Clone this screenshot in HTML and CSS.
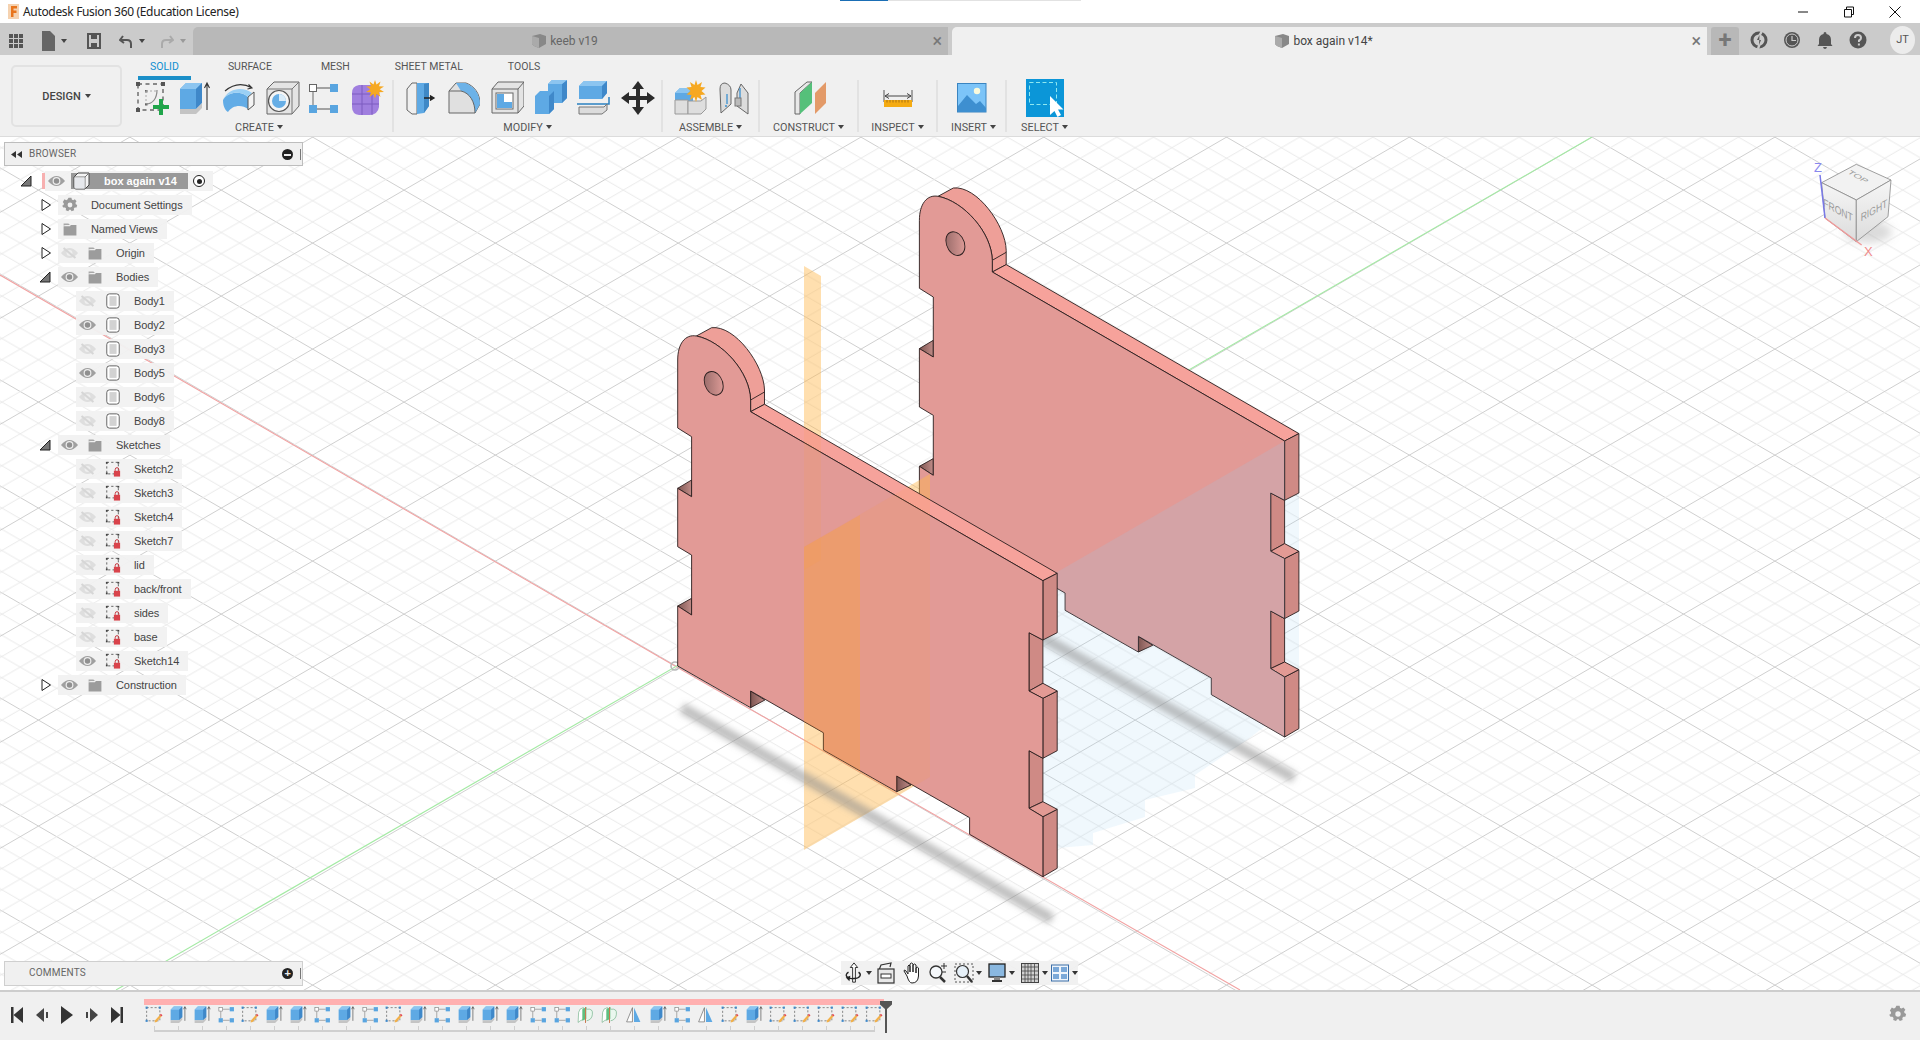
FILE: index.html
```html
<!DOCTYPE html>
<html lang="en">
<head>
<meta charset="utf-8">
<title>Autodesk Fusion 360 (Education License)</title>
<link rel="stylesheet" href="styles.css">
</head>
<body>
<svg class="sprites" width="0" height="0">
<defs>
<symbol id="i-sketch" viewBox="0 0 36 36"><rect x="5" y="4" width="25" height="26" fill="none" stroke="#666" stroke-width="1.4" stroke-dasharray="4 3.5"/><g fill="#555"><rect x="3" y="2" width="4" height="4"/><rect x="28" y="2" width="4" height="4"/><rect x="3" y="28" width="4" height="4"/></g><rect x="12" y="10" width="2.5" height="2.5" fill="#666"/><rect x="12" y="23" width="2.5" height="2.5" fill="#666"/><path d="M13 24C20 24 24 18 24 10" fill="none" stroke="#888" stroke-width="1.2"/><path d="M13 11H24M13 11V24" fill="none" stroke="#aaa" stroke-dasharray="2 2"/><path d="M26 19h4v6h6v4h-6v6h-4v-6h-6v-4h6z" fill="#20a54a"/></symbol>
<symbol id="i-extrude" viewBox="0 0 36 36"><polygon points="5,9 11,3 27,3 27,23 21,29 5,29" fill="#5ea9e4"/><polygon points="5,9 11,3 27,3 21,9" fill="#8cc5f0"/><polygon points="21,9 27,3 27,23 21,29" fill="#3f88c9"/><polygon points="5,29 21,29 27,23 27,28 21,34 5,34" fill="#c4c4c4"/><path d="M32 30V4M29.500 8L32 3l2.500 5" fill="none" stroke="#333" stroke-width="1.100"/></symbol>
<symbol id="i-revolve" viewBox="0 0 36 36"><path d="M2 20C7 11 21 11 27 17L27 29C21 24 11 25 7 32C4 30 2 26 2 20Z" fill="#62ace6"/><path d="M2 20C7 11 21 11 27 17L31 13C22 6 7 8 2 20Z" fill="#9ad0f5"/><path d="M27 17L33 12V25L27 30Z" fill="#f4f4f4" stroke="#555"/><path d="M4 11Q17 0 31 8M27.500 4.500L31 8L26.500 9" fill="none" stroke="#333" stroke-width="1.100"/></symbol>
<symbol id="i-hole" viewBox="0 0 36 36"><polygon points="2,9 9,2 34,2 34,26 27,34 2,34" fill="#e4e4e4" stroke="#666"/><path d="M2 9H27V34M27 9L34 2" fill="none" stroke="#777"/><circle cx="14" cy="21" r="10.500" fill="#f5f5f5" stroke="#555" stroke-width="1.200"/><circle cx="14" cy="21" r="7" fill="#66aee6"/><path d="M14 14A7 7 0 0 1 21 21L14 21Z" fill="#d8ecfa"/></symbol>
<symbol id="i-pattern" viewBox="0 0 36 36"><path d="M13 8H26M9 12V25M13 29H26" stroke="#888" stroke-width="1.300" fill="none"/><rect x="5.500" y="4.500" width="7" height="7" fill="#fff" stroke="#666"/><rect x="26" y="4" width="8" height="8" fill="#59a5e0"/><rect x="5" y="25" width="8" height="8" fill="#59a5e0"/><rect x="26" y="25" width="8" height="8" fill="#59a5e0"/></symbol>
<symbol id="i-form" viewBox="0 0 36 36"><path d="M4 13Q4 6 11 5H24Q31 7 31 14V27Q30 34 22 35H11Q4 34 4 27Z" fill="#a07fdf"/><path d="M4 14H31M4 24H31M14 5V35M24 5V35" stroke="#7c5cc0" fill="none"/><path d="M31 14Q31 8 24 5" fill="none" stroke="#c6b2f0" stroke-width="2"/><path d="M27 0l1.500 4.500 4-3-1.500 4.800 5 .2-4.300 2.800 4.300 2.800-5 .2 1.500 4.800-4-3-1.500 4.500-1.500-4.500-4 3 1.500-4.800-5-.2 4.300-2.800-4.300-2.800 5-.2-1.500-4.800 4 3z" fill="#f6a821"/></symbol>
<symbol id="i-press" viewBox="0 0 36 36"><path d="M7 9L12 3H17V34H12L7 30Z" fill="#efefef" stroke="#666"/><polygon points="17,3 24,3 29,3 29,26 24,33 17,34" fill="#5ea9e4"/><polygon points="24,4 29,3 29,26 24,33" fill="#3e88c6"/><path d="M24 18H32M30 15.500L34 18L30 20.500" fill="#222" stroke="#222" stroke-width="1.300"/></symbol>
<symbol id="i-fillet" viewBox="0 0 36 36"><path d="M5 11L12 3H22C30 6 36 13 36 24L31 33H5Z" fill="#e0e0e0" stroke="#666"/><path d="M12 3H21C30 6 36 14 36 24L31 33C31 22 26 13 17 11Z" fill="#6cb2e8"/><path d="M5 11H17C26 13 31 22 31 33" fill="none" stroke="#666"/></symbol>
<symbol id="i-shell" viewBox="0 0 36 36"><polygon points="4,9 10,2 36,2 36,26 30,33 4,33" fill="#e4e4e4" stroke="#666"/><path d="M4 9H30V33M30 9L36 2" fill="none" stroke="#666"/><rect x="8" y="13" width="17" height="16" fill="#fff" stroke="#666"/><polygon points="9,14 16,14 16,22 24,22 24,28 9,28" fill="#5ea9e4"/></symbol>
<symbol id="i-combine" viewBox="0 0 36 36"><polygon points="16,4 20,0 35,0 35,18 30,23 16,23" fill="#5ea9e4"/><polygon points="3,16 8,11 22,11 22,29 17,34 3,34" fill="#5ea9e4"/><polygon points="30,4 35,0 35,18 30,23" fill="#3f88c9"/><polygon points="17,16 22,11 22,29 17,34" fill="#3f88c9"/><polygon points="16,4 20,0 35,0 30,4" fill="#8cc5f0"/></symbol>
<symbol id="i-split" viewBox="0 0 36 36"><polygon points="3,6 8,1 31,1 31,13 26,19 3,19" fill="#5ea9e4"/><polygon points="3,6 8,1 31,1 26,6" fill="#8cc5f0"/><polygon points="26,6 31,1 31,13 26,19" fill="#3f88c9"/><path d="M1 24L33 24L33 17" fill="none" stroke="#2a80c0" stroke-width="1.500"/><polygon points="3,27 28,27 31,24 31,30 26,34 3,34" fill="#dcdcdc" stroke="#777"/></symbol>
<symbol id="i-move" viewBox="0 0 36 36"><path d="M18 1l6 8h-4v7h7v-4l8 6-8 6v-4h-7v7h4l-6 8-6-8h4v-7H9v4l-8-6 8-6v4h7V9h-4z" fill="#2b2b2b"/></symbol>
<symbol id="i-assemble" viewBox="0 0 36 36"><polygon points="4,13 9,8 22,8 22,22 17,28 4,28" fill="#5ea9e4"/><polygon points="4,13 9,8 22,8 17,13" fill="#8cc5f0"/><polygon points="4,20 17,20 17,34 4,34" fill="#dedede" stroke="#999"/><polygon points="17,21 30,21 35,17 35,29 30,34 17,34" fill="#dedede" stroke="#999"/><path d="M25 0l1.500 5 4.500-3-1.500 5 5 .5-4 3.500 4 3.500-5 .5 1.500 5-4.500-3-1.500 5-1.500-5-4.500 3 1.500-5-5-.5 4-3.500-4-3.500 5-.5-1.500-5 4.500 3z" fill="#f6a821"/></symbol>
<symbol id="i-joint" viewBox="0 0 36 36"><path d="M5 9Q5 3 10 3Q16 5 16 10V24L6 33Z" fill="#dcdcdc" stroke="#666"/><path d="M22 13L26 4L33 13V34L22 26Z" fill="#dcdcdc" stroke="#666"/><path d="M12 14V24M10 26H12" stroke="#3a90d0" stroke-width="1.300" fill="none"/><path d="M25 8V18" stroke="#3a90d0" stroke-width="1.300"/><rect x="20" y="18" width="6" height="8" fill="#bbb" stroke="#777"/></symbol>
<symbol id="i-construct" viewBox="0 0 36 36"><polygon points="4,12 16,2 21,2 9,13 9,34 4,34" fill="#e8e8e8" stroke="#666"/><polygon points="9,13 21,2 21,23 9,34" fill="#55c07a"/><polygon points="24,13 35,2 35,23 24,34" fill="#e39a68"/></symbol>
<symbol id="i-inspect" viewBox="0 0 36 36"><path d="M4 10V22M32 10V22" stroke="#555"/><path d="M5 16H31M9 13.500L5 16L9 18.500M27 13.500L31 16L27 18.500" stroke="#444" fill="none"/><rect x="4" y="20" width="28" height="7" fill="#f5ab12"/><path d="M7 20v2.500M10 20v2.500M13 20v2.500M16 20v2.500M19 20v2.500M22 20v2.500M25 20v2.500M28 20v2.500" stroke="#8a5a10" stroke-width=".7"/></symbol>
<symbol id="i-insert" viewBox="0 0 36 36"><rect x="3.500" y="3.500" width="28.500" height="28.500" fill="#7cc4f8" stroke="#3a84c0"/><circle cx="23" cy="11" r="3.200" fill="#fafadc"/><path d="M4 26L13 15L22 24L26 21L32 28V32H4Z" fill="#3e8fd0"/></symbol>
<symbol id="i-select" viewBox="0 0 38 38"><rect width="38" height="38" fill="#0b96d8"/><rect x="3.500" y="3.500" width="27" height="22" fill="none" stroke="#8fe8f0" stroke-dasharray="4 2.500"/><path d="M24 17V36L28.500 32L31.500 38L35 36L32 30.500H37.500Z" fill="#fff"/></symbol>
<symbol id="t-sk" viewBox="0 0 36 36"><rect x="5" y="5" width="25" height="25" fill="none" stroke="#666" stroke-width="1.400" stroke-dasharray="4 3.500"/><g fill="#3f88c9"><rect x="3" y="3" width="4" height="4"/><rect x="28" y="3" width="4" height="4"/><rect x="3" y="28" width="4" height="4"/></g><path d="M20 33l1-4 9-10 3 3-9 10z" fill="#f2b04a"/><path d="M30 19l3 3 2-2.500-3-3z" fill="#e5484d"/></symbol>
<symbol id="t-con" viewBox="0 0 36 36"><path d="M5 14Q6 6 14 5L14 27Q7 30 4 33Z" fill="#fff" stroke="#4f9f6c"/><path d="M12 8L20 4V26L12 30Z" fill="#60c080"/><path d="M18 4L18 34" stroke="#c87a50" stroke-width="2"/><path d="M20 8Q33 6 31 18Q30 28 20 30" fill="#eaf7ee" stroke="#4f9f6c"/></symbol>
<symbol id="t-mir" viewBox="0 0 36 36"><polygon points="5,32 16,5 16,32" fill="#fff" stroke="#666" stroke-width="1.300"/><polygon points="19,5 31,32 19,32" fill="#5ea9e4"/></symbol>
<symbol id="eye" viewBox="0 0 20 14"><path d="M0 7Q10 -5 20 7Q10 19 0 7Z" fill="#a0a0a0"/><circle cx="10" cy="7" r="4.600" fill="#eee"/><circle cx="10" cy="7" r="3.200" fill="#909090"/></symbol>
<symbol id="eye-off" viewBox="0 0 20 14"><path d="M0 7Q10 -5 20 7Q10 19 0 7Z" fill="#dedede"/><circle cx="10" cy="7" r="3.500" fill="#eee"/><path d="M3 1L17 13" stroke="#d6d6d6" stroke-width="2.400"/></symbol>
<symbol id="folder" viewBox="0 0 20 16"><path d="M2 1h6l2 2H4v1H2z" fill="#a8a8a8"/><rect x="2" y="3.500" width="8" height="1" fill="#eee"/><path d="M2 4.500H10L11 3H18V16H2Z" fill="#9c9c9c"/></symbol>
<symbol id="gear" viewBox="0 0 20 20"><path d="M8 1h4l.6 2.600 1.800.8L16.700 3l2.400 2.900-1.500 2.200.4 1.900 2 1-.9 3.600-2.500-.1-1.300 1.500.4 2.500-3.500 1.200-1.300-2.100h-2l-1.300 2.100-3.500-1.200.4-2.500-1.300-1.500-2.500.1L-.9 12l2-1 .4-1.900-1.500-2.200L2.400 3l2.300 1.400 1.800-.8z" fill="#999" transform="translate(1 0) scale(.9)"/><circle cx="10" cy="10" r="3" fill="#f0f0f0"/></symbol>
<symbol id="body" viewBox="0 0 16 18"><rect x="1" y="1" width="14" height="16" rx="3" fill="#fff" stroke="#555"/><rect x="4" y="3.500" width="8" height="11" fill="#d2d2d2"/></symbol>
<symbol id="rootbox" viewBox="0 0 17 18"><path d="M1 5L5 1H16V13L12 17H3Q1 17 1 15Z" fill="#f4f4f4" stroke="#444"/><path d="M1 5H12V17M12 5L16 1" fill="none" stroke="#777"/><polygon points="1.500,5.500 11.500,5.500 11.500,16.500 1.500,16.500" fill="#e6e8ec"/></symbol>
<symbol id="sk-lock" viewBox="0 0 18 18"><rect x="2" y="1.500" width="13" height="13" fill="none" stroke="#555" stroke-dasharray="2.500 2.500"/><g fill="#444"><rect x="1" y="1" width="2" height="2"/><rect x="14" y="1" width="2" height="2"/><rect x="1" y="13" width="2" height="2"/></g><path d="M11.500 11V9.500a2 2 0 0 1 4 0V11" fill="none" stroke="#c4323a" stroke-width="1.100"/><rect x="10" y="11" width="7" height="6.500" fill="#d9434b"/></symbol>
<symbol id="cube" viewBox="0 0 16 16"><path d="M1 3L9 1L15 3V11L8 15L3 13L1 11Z" fill="#888"/><path d="M1 3L8 5V15L3 13L1 11Z" fill="#aaa"/></symbol>
<symbol id="tri-c" viewBox="0 0 12 12"><polygon points="3,.5 11.500,6 3,11.500" fill="#fff" stroke="#222"/></symbol>
<symbol id="tri-o" viewBox="0 0 12 12"><polygon points="1,11 11,1 11,11" fill="#777" stroke="#222"/></symbol>
</defs>
</svg>

<div class="app">
  <header class="titlebar">
    <svg class="f-logo" viewBox="0 0 11 15"><rect width="11" height="15" fill="#f5d2b0"/><path d="M3 2H9V4.500H5.500V6.500H8.500V9H5.500V13H3Z" fill="#e8741c"/></svg>
    <span class="app-title">Autodesk Fusion 360 (Education License)</span>
    <div class="progress"><span class="progress-on"></span></div>
    <div class="winctl">
      <svg viewBox="0 0 12 12"><path d="M1 6H11" stroke="#111"/></svg>
      <svg viewBox="0 0 12 12"><path d="M1.500 3.500H8.500V11H1.500ZM3.500 3.500V1H10.500V8.500H8.500" fill="none" stroke="#111"/></svg>
      <svg viewBox="0 0 12 12"><path d="M.5 .5L11.500 11.500M11.500 .5L.5 11.500" stroke="#111"/></svg>
    </div>
  </header>

  <div class="tabstrip">
    <div class="quick">
      <svg class="q-grid" viewBox="0 0 14 14"><g fill="#555"><rect width="4" height="4"/><rect x="5" width="4" height="4"/><rect x="10" width="4" height="4"/><rect y="5" width="4" height="4"/><rect x="5" y="5" width="4" height="4"/><rect x="10" y="5" width="4" height="4"/><rect y="10" width="4" height="4"/><rect x="5" y="10" width="4" height="4"/><rect x="10" y="10" width="4" height="4"/></g></svg>
      <svg class="q-doc" viewBox="0 0 13 20"><path d="M0 0H8L13 5V20H0Z" fill="#666"/></svg><i class="caret q-c1"></i>
      <svg class="q-save" viewBox="0 0 14 16"><path d="M1 1H13V15H1Z" fill="none" stroke="#555" stroke-width="2"/><rect x="4" y="1" width="6" height="5" fill="#555"/><rect x="4" y="10" width="6" height="5" fill="#555"/></svg>
      <svg class="q-undo" viewBox="0 0 14 14"><path d="M4 2L1 6L5 9M1.500 6H8Q12 6 12 10V14" fill="none" stroke="#555" stroke-width="2"/></svg><i class="caret q-c2"></i>
      <svg class="q-redo" viewBox="0 0 14 14"><path d="M10 2L13 6L9 9M12.500 6H6Q2 6 2 10V14" fill="none" stroke="#aaa" stroke-width="2"/></svg><i class="caret q-c3"></i>
    </div>
    <div class="doc-tab doc-tab-off">
      <span class="doc-name"><svg class="doc-cube"><use href="#cube"/></svg>keeb v19</span><span class="doc-x">&#215;</span>
    </div>
    <div class="doc-tab doc-tab-on">
      <span class="doc-name"><svg class="doc-cube"><use href="#cube"/></svg>box again v14*</span><span class="doc-x">&#215;</span>
    </div>
    <div class="newtab">+</div>
    <div class="account">
      <svg viewBox="0 0 18 18"><circle cx="9" cy="9" r="7" fill="none" stroke="#555" stroke-width="3"/><path d="M12 0L7 9H11L8 18" stroke="#cbcbcb" stroke-width="2.400" fill="none"/><path d="M9.500 4L7 9H11L9 14Z" fill="#555"/></svg>
      <svg viewBox="0 0 18 18"><circle cx="9" cy="9" r="8" fill="#555"/><circle cx="9" cy="9" r="6" fill="none" stroke="#ccc"/><path d="M9 5V9.500H13" stroke="#ccc" fill="none" stroke-width="1.200"/></svg>
      <svg viewBox="0 0 18 18"><path d="M9 1Q10.500 1 10.500 3Q15 4 15 9V13L16.500 15H1.500L3 13V9Q3 4 7.500 3Q7.500 1 9 1ZM7 16H11Q10.500 18 9 18Q7.500 18 7 16Z" fill="#555"/></svg>
      <svg viewBox="0 0 18 18"><circle cx="9" cy="9" r="8.500" fill="#555"/><path d="M6 7Q6 4 9 4Q12 4 12 7Q12 8.500 10 9.500V11M9.900 12.500V14.500" stroke="#ccc" stroke-width="2" fill="none"/></svg>
      <span class="avatar">JT</span>
    </div>
  </div>

  <div class="ribbon">
    <button class="design">DESIGN<i class="caret"></i></button>
    <div class="tools">
      <nav class="rtabs">
        <span class="rtab rtab-on">SOLID</span><span class="rtab rtab-wide">SURFACE</span><span class="rtab">MESH</span><span class="rtab">SHEET METAL</span><span class="rtab">TOOLS</span>
      </nav>
      <div class="groups">
        <div class="grp g-create">
          <div class="tbtns"><svg class="tb"><use href="#i-sketch"/></svg><svg class="tb tb-s2"><use href="#i-extrude"/></svg><svg class="tb"><use href="#i-revolve"/></svg><svg class="tb"><use href="#i-hole"/></svg><svg class="tb tb-s5"><use href="#i-pattern"/></svg><svg class="tb tb-s5"><use href="#i-form"/></svg></div>
          <div class="glabel">CREATE<i class="caret"></i></div>
        </div>
        <div class="grp g-modify">
          <div class="tbtns"><svg class="tb"><use href="#i-press"/></svg><svg class="tb"><use href="#i-fillet"/></svg><svg class="tb"><use href="#i-shell"/></svg><svg class="tb"><use href="#i-combine"/></svg><svg class="tb"><use href="#i-split"/></svg><svg class="tb"><use href="#i-move"/></svg></div>
          <div class="glabel">MODIFY<i class="caret"></i></div>
        </div>
        <div class="grp g-assemble">
          <div class="tbtns"><svg class="tb"><use href="#i-assemble"/></svg><svg class="tb"><use href="#i-joint"/></svg></div>
          <div class="glabel">ASSEMBLE<i class="caret"></i></div>
        </div>
        <div class="grp g-construct">
          <div class="tbtns"><svg class="tb"><use href="#i-construct"/></svg></div>
          <div class="glabel">CONSTRUCT<i class="caret"></i></div>
        </div>
        <div class="grp g-inspect">
          <div class="tbtns"><svg class="tb"><use href="#i-inspect"/></svg></div>
          <div class="glabel">INSPECT<i class="caret"></i></div>
        </div>
        <div class="grp g-insert">
          <div class="tbtns"><svg class="tb"><use href="#i-insert"/></svg></div>
          <div class="glabel">INSERT<i class="caret"></i></div>
        </div>
        <div class="grp g-select">
          <div class="tbtns"><svg class="tb tb-sel"><use href="#i-select"/></svg></div>
          <div class="glabel">SELECT<i class="caret"></i></div>
        </div>
      </div>
    </div>
  </div>

  <main class="viewport">
    <svg class="scene" viewBox="0 137 1920 853" preserveAspectRatio="none">
      <defs>
        <pattern id="gA" patternUnits="userSpaceOnUse" width="100" height="106" patternTransform="translate(0 61.3) skewY(30.11)">
          <rect width="100" height="1" fill="#cfcfcf"/>
          <g fill="#e9e9e9"><rect y="21.200" width="100" height="1"/><rect y="42.400" width="100" height="1"/><rect y="63.600" width="100" height="1"/><rect y="84.800" width="100" height="1"/></g>
        </pattern>
        <pattern id="gB" patternUnits="userSpaceOnUse" width="100" height="106" patternTransform="translate(0 1059.900) skewY(-30.11)">
          <rect width="100" height="1" fill="#cfcfcf"/>
          <g fill="#e9e9e9"><rect y="21.200" width="100" height="1"/><rect y="42.400" width="100" height="1"/><rect y="63.600" width="100" height="1"/><rect y="84.800" width="100" height="1"/></g>
        </pattern>
        <filter id="blur3" x="-10%" y="-30%" width="120%" height="160%"><feGaussianBlur stdDeviation="3"/></filter>
        <filter id="blur6" x="-50%" y="-50%" width="200%" height="200%"><feGaussianBlur stdDeviation="4"/></filter>
        <linearGradient id="holeG" x1="0" x2="1" y1="0" y2="0"><stop offset="0" stop-color="#9c6e6c"/><stop offset="1" stop-color="#dc9a96"/></linearGradient>
        <linearGradient id="notchG" x1="0" x2="1" y1="0" y2="0"><stop offset="0" stop-color="#7e5652"/><stop offset="1" stop-color="#c08c88"/></linearGradient>
        <linearGradient id="cubeG" x1="0" x2="0" y1="0" y2="1"><stop offset="0" stop-color="#f6f6f6"/><stop offset="1" stop-color="#dcdcdc"/></linearGradient>
        <path id="faceP" d="M677.700 428L677.700 360C677.700 344 685 334 696.400 336C722 341 750 372 750.600 400L750.600 411.700L1042.900 580.700L1042.900 640L1029 632.700L1029 691L1042.900 698.300L1042.900 758.300L1029 750.700L1029 808.300L1042.900 816.700L1042.900 876.700L969.600 834.300L969.600 817.700L896.700 776L896.700 791.700L823.400 750L823.400 732.700L750.600 691L750.600 707.700L677.700 666L677.700 606L691.600 615L691.600 555L677.700 546.700L677.700 488.300L691.600 496.700L691.600 436.700Z"/>
        <polygon id="topP" points="750.600,411.700 764.500,404.300 1057.200,573.300 1042.900,580.700"/>
        <clipPath id="clipFront"><use href="#faceP"/><use href="#topP"/></clipPath>
        <clipPath id="clipBack"><use href="#faceP" transform="translate(241.700 -139.700)"/></clipPath>
        <g id="plate" stroke="#2a1e1e" stroke-width=".9" stroke-linejoin="round">
          <path d="M696.400 336L711.600 327.700C735 325 764 365 764.500 390L764.500 404.300L750.600 411.700L750.600 400C750 372 722 341 696.400 336Z" fill="#ee9f98"/>
          <path d="M750.600 400L764.500 392" fill="none"/>
          <use href="#topP" fill="#f6a29b"/>
          <g fill="#cf8a85">
            <polygon points="1042.900,580.700 1057.200,573.300 1057.200,632.700 1042.900,640"/>
            <polygon points="1029,632.700 1042.900,640 1042.900,683.300 1029,691"/>
            <polygon points="1042.900,698.300 1057.200,691 1057.200,750.700 1042.900,758.300"/>
            <polygon points="1029,750.700 1042.900,758.300 1042.900,801.700 1029,808.300"/>
            <polygon points="1042.900,816.700 1057.200,809.300 1057.200,868.300 1042.900,876.700"/>
          </g>
          <g fill="#e39a94">
            <polygon points="1029,691 1042.900,683.300 1057.200,691 1042.900,698.300"/>
            <polygon points="1029,808.300 1042.900,801.700 1057.200,809.300 1042.900,816.700"/>
          </g>
          <g fill="url(#notchG)">
            <polygon points="677.700,488.300 691.600,480 691.600,496.700"/>
            <polygon points="677.700,606 691.600,598.300 691.600,615"/>
            <polygon points="750.600,691 764.900,700 750.600,707.700"/>
            <polygon points="896.700,776 911,785 896.700,791.700"/>
          </g>
          <use href="#faceP" fill="#e29a96"/>
          <ellipse cx="713.700" cy="383.300" rx="9.500" ry="11.500" transform="translate(713.700 383.300) matrix(1 .3 0 1 0 0) translate(-713.700 -383.300)" fill="url(#holeG)"/>
        </g>
      </defs>

      <rect x="0" y="137" width="1920" height="853" fill="#fff"/>
      <rect x="0" y="137" width="1920" height="853" fill="url(#gA)"/>
      <rect x="0" y="137" width="1920" height="853" fill="url(#gB)"/>
      <path d="M0 275L675 666L1240 990" stroke="#f2a2a2" stroke-width="1.100" fill="none"/>
      <path d="M1592 137L116 990" stroke="#a4eaa4" stroke-width="1.100" fill="none"/>
      <circle cx="675" cy="666" r="4" fill="none" stroke="#b8b8b8" stroke-width="1.600"/>

      <polygon class="ground" points="1042,580 1285,440 1299,433 1299,700 1247,740 1195,775 1195,788 1145,800 1145,817 1093,833 1093,845 1058,848 1042,860"/>
      <line class="shadow" x1="925" y1="572" x2="1294" y2="778"/>
      <use href="#plate" transform="translate(241.700 -139.700)"/>
      <polygon class="back-tint" points="1285,440.700 1000,605 1000,900 1320,900 1320,440" clip-path="url(#clipBack)"/>

      <polygon class="plane" points="804,266 821,276 821,700 804,690"/>
      <polygon class="plane" points="804,547 930,474 930,777 804,850"/>
      <line class="shadow" x1="682" y1="708" x2="1052" y2="919"/>
      <use href="#plate"/>
      <g clip-path="url(#clipFront)">
        <polygon class="over-light" points="804,266 821,276 821,560 804,570"/>
        <polygon class="over-light" points="804,547 930,474 930,777 804,850"/>
        <polygon class="over-deep" points="804,547 860,515 860,830 804,800"/>
      </g>

      <ellipse class="cube-shadow" cx="1868" cy="232" rx="24" ry="11"/>
      <g class="navcube">
        <polygon points="1856.300,164.300 1891,180 1856.300,200 1821.600,182.700" fill="#f2f2f2"/>
        <polygon points="1821.600,182.700 1856.300,200 1856.300,241.700 1825,218" fill="url(#cubeG)"/>
        <polygon points="1856.300,200 1891,180 1888,216.700 1856.300,241.700" fill="url(#cubeG)"/>
      </g>
      <text class="cube-t" transform="matrix(.9 .52 -.6 .4 1856 178)" text-anchor="middle">TOP</text>
      <text class="cube-t" transform="matrix(.86 .46 0 1.100 1838 214)" text-anchor="middle">FRONT</text>
      <text class="cube-t" transform="matrix(.86 -.48 0 1.100 1874 214)" text-anchor="middle">RIGHT</text>
      <path d="M1820 175L1825 218" stroke="#7878e8" stroke-width="1.500" fill="none"/>
      <path d="M1825 218L1861.600 245" stroke="#f09a9a" stroke-width="1.500" fill="none"/>
      <text class="axis-z" x="1814" y="172">Z</text>
      <text class="axis-x" x="1864" y="256">X</text>
    </svg>

    <section class="browser">
      <div class="panelbar">
        <svg class="rew" viewBox="0 0 11 7"><path d="M5 0V7L0 3.500ZM11 0V7L6 3.500Z" fill="#333"/></svg><span class="panel-t">BROWSER</span><i class="minus"></i><i class="pipe"></i>
      </div>
      <div class="tree">
        <div class="row l0"><span class="tw"><svg class="ar"><use href="#tri-o"/></svg></span><div class="pill root">
          <svg class="eye"><use href="#eye"/></svg>
          <div class="rootlabel"><svg class="rootic"><use href="#rootbox"/></svg><span>box again v14</span></div>
          <span class="radio"></span></div></div>
        <div class="row l1"><span class="tw"><svg class="ar"><use href="#tri-c"/></svg></span><div class="pill"><svg class="ic ic-first"><use href="#gear"/></svg><span class="lbl">Document Settings</span></div></div>
        <div class="row l1"><span class="tw"><svg class="ar"><use href="#tri-c"/></svg></span><div class="pill"><svg class="ic ic-first"><use href="#folder"/></svg><span class="lbl">Named Views</span></div></div>
        <div class="row l1"><span class="tw"><svg class="ar"><use href="#tri-c"/></svg></span><div class="pill"><svg class="eye"><use href="#eye-off"/></svg><svg class="ic"><use href="#folder"/></svg><span class="lbl">Origin</span></div></div>
        <div class="row l1"><span class="tw"><svg class="ar"><use href="#tri-o"/></svg></span><div class="pill"><svg class="eye"><use href="#eye"/></svg><svg class="ic"><use href="#folder"/></svg><span class="lbl">Bodies</span></div></div>
        <div class="row l2"><div class="pill"><svg class="eye"><use href="#eye-off"/></svg><svg class="ic"><use href="#body"/></svg><span class="lbl">Body1</span></div></div>
        <div class="row l2"><div class="pill"><svg class="eye"><use href="#eye"/></svg><svg class="ic"><use href="#body"/></svg><span class="lbl">Body2</span></div></div>
        <div class="row l2"><div class="pill"><svg class="eye"><use href="#eye-off"/></svg><svg class="ic"><use href="#body"/></svg><span class="lbl">Body3</span></div></div>
        <div class="row l2"><div class="pill"><svg class="eye"><use href="#eye"/></svg><svg class="ic"><use href="#body"/></svg><span class="lbl">Body5</span></div></div>
        <div class="row l2"><div class="pill"><svg class="eye"><use href="#eye-off"/></svg><svg class="ic"><use href="#body"/></svg><span class="lbl">Body6</span></div></div>
        <div class="row l2"><div class="pill"><svg class="eye"><use href="#eye-off"/></svg><svg class="ic"><use href="#body"/></svg><span class="lbl">Body8</span></div></div>
        <div class="row l1"><span class="tw"><svg class="ar"><use href="#tri-o"/></svg></span><div class="pill"><svg class="eye"><use href="#eye"/></svg><svg class="ic"><use href="#folder"/></svg><span class="lbl">Sketches</span></div></div>
        <div class="row l2"><div class="pill"><svg class="eye"><use href="#eye-off"/></svg><svg class="ic"><use href="#sk-lock"/></svg><span class="lbl">Sketch2</span></div></div>
        <div class="row l2"><div class="pill"><svg class="eye"><use href="#eye-off"/></svg><svg class="ic"><use href="#sk-lock"/></svg><span class="lbl">Sketch3</span></div></div>
        <div class="row l2"><div class="pill"><svg class="eye"><use href="#eye-off"/></svg><svg class="ic"><use href="#sk-lock"/></svg><span class="lbl">Sketch4</span></div></div>
        <div class="row l2"><div class="pill"><svg class="eye"><use href="#eye-off"/></svg><svg class="ic"><use href="#sk-lock"/></svg><span class="lbl">Sketch7</span></div></div>
        <div class="row l2"><div class="pill"><svg class="eye"><use href="#eye-off"/></svg><svg class="ic"><use href="#sk-lock"/></svg><span class="lbl">lid</span></div></div>
        <div class="row l2"><div class="pill"><svg class="eye"><use href="#eye-off"/></svg><svg class="ic"><use href="#sk-lock"/></svg><span class="lbl">back/front</span></div></div>
        <div class="row l2"><div class="pill"><svg class="eye"><use href="#eye-off"/></svg><svg class="ic"><use href="#sk-lock"/></svg><span class="lbl">sides</span></div></div>
        <div class="row l2"><div class="pill"><svg class="eye"><use href="#eye-off"/></svg><svg class="ic"><use href="#sk-lock"/></svg><span class="lbl">base</span></div></div>
        <div class="row l2"><div class="pill"><svg class="eye"><use href="#eye"/></svg><svg class="ic"><use href="#sk-lock"/></svg><span class="lbl">Sketch14</span></div></div>
        <div class="row l1"><span class="tw"><svg class="ar"><use href="#tri-c"/></svg></span><div class="pill"><svg class="eye"><use href="#eye"/></svg><svg class="ic"><use href="#folder"/></svg><span class="lbl">Construction</span></div></div>
      </div>
    </section>

    <section class="comments">
      <span class="panel-t">COMMENTS</span><i class="plus"></i><i class="pipe"></i>
    </section>

    <div class="navbar">
      <svg class="nb nb1" viewBox="0 0 20 24"><path d="M10 1L6 6H8.500V22H11.500V6H14L10 1Z" fill="#fff" stroke="#222"/><path d="M4 11C-1 14 2 19 10 18C16 18 19 14 15 11" fill="none" stroke="#222" stroke-width="1.500"/><path d="M6 15L1 17L5 21Z" fill="#222"/></svg><i class="caret"></i>
      <svg class="nb nb2" viewBox="0 0 20 22"><path d="M3 8L5 3L15 1L14 5" fill="none" stroke="#333" stroke-width="1.200"/><rect x="2" y="7" width="16" height="14" fill="#e8e8e8" stroke="#333" stroke-width="1.200"/><rect x="5" y="12" width="10" height="4" fill="#fff" stroke="#333"/></svg>
      <svg class="nb nb3" viewBox="0 0 20 22"><path d="M5 14L2 9Q2 7 4 9L6 12V4Q7 2 8 4V10V2Q9.500 0 11 2V10V3Q12.500 1 14 3V11V6Q15 4 16.500 6V14Q16 21 10 21Q7 21 5 14Z" fill="#fff" stroke="#222"/></svg>
      <svg class="nb nb4" viewBox="0 0 20 22"><circle cx="8" cy="10" r="6" fill="#f5f8fb" stroke="#333" stroke-width="1.300"/><path d="M12 15L17 20" stroke="#333" stroke-width="2.500"/><path d="M13 4H19M16 1V7M14 10H18" stroke="#333"/></svg>
      <svg class="nb nb5" viewBox="0 0 20 22"><rect x="1" y="2" width="18" height="18" fill="none" stroke="#555" stroke-dasharray="2 2"/><circle cx="8.500" cy="9.500" r="6" fill="#e6f0f8" stroke="#333" stroke-width="1.200"/><path d="M13 14L18 20" stroke="#333" stroke-width="2.500"/></svg><i class="caret"></i>
      <svg class="nb nb6" viewBox="0 0 20 22"><rect x="2" y="2" width="16" height="13" fill="#8ab8e0" stroke="#222" stroke-width="1.300"/><rect x="7" y="15" width="6" height="3" fill="#888"/><rect x="5" y="18" width="10" height="2" fill="#333"/></svg><i class="caret"></i>
      <svg class="nb nb7" viewBox="0 0 20 22"><rect x="1.500" y="1.500" width="17" height="19" fill="#d0d0d0" stroke="#444"/><path d="M5 1.500V20.500M8 1.500V20.500M11 1.500V20.500M14.500 1.500V20.500M1.500 5H18.500M1.500 9H18.500M1.500 13H18.500M1.500 17H18.500" stroke="#444" stroke-width=".8"/></svg><i class="caret"></i>
      <svg class="nb nb8" viewBox="0 0 20 22"><rect x="1.500" y="3" width="17" height="16" fill="#eef4fb" stroke="#3a6ea8"/><g fill="#7aa8d8"><rect x="3" y="5" width="6" height="5"/><rect x="11" y="5" width="6" height="5"/><rect x="3" y="12" width="6" height="5"/><rect x="11" y="12" width="6" height="5"/></g></svg><i class="caret"></i>
    </div>
  </main>

  <footer class="timeline">
    <div class="playback">
      <svg viewBox="0 0 14 18"><rect x="1" y="1" width="2.500" height="16" fill="#333"/><polygon points="13,1 13,17 3.500,9" fill="#333"/></svg>
      <svg viewBox="0 0 14 18"><polygon points="9,2 9,16 1,9" fill="#444"/><rect x="11" y="6" width="2" height="6" fill="#444"/></svg>
      <svg viewBox="0 0 14 18"><polygon points="1,0 13,9 1,18" fill="#333"/></svg>
      <svg viewBox="0 0 14 18"><rect x="1" y="6" width="2" height="6" fill="#444"/><polygon points="5,2 13,9 5,16" fill="#444"/></svg>
      <svg viewBox="0 0 14 18"><polygon points="1,1 1,17 10.500,9" fill="#333"/><rect x="10.500" y="1" width="2.500" height="16" fill="#333"/></svg>
    </div>
    <div class="track">
      <div class="track-bar"></div>
      <div class="track-items">
        <svg><use href="#t-sk"/></svg><svg><use href="#i-extrude"/></svg><svg><use href="#i-extrude"/></svg><svg><use href="#i-pattern"/></svg><svg><use href="#t-sk"/></svg><svg><use href="#i-extrude"/></svg><svg><use href="#i-extrude"/></svg><svg><use href="#i-pattern"/></svg><svg><use href="#i-extrude"/></svg><svg><use href="#i-pattern"/></svg><svg><use href="#t-sk"/></svg><svg><use href="#i-extrude"/></svg><svg><use href="#i-pattern"/></svg><svg><use href="#i-extrude"/></svg><svg><use href="#i-extrude"/></svg><svg><use href="#i-extrude"/></svg><svg><use href="#i-pattern"/></svg><svg><use href="#i-pattern"/></svg><svg><use href="#t-con"/></svg><svg><use href="#t-con"/></svg><svg><use href="#t-mir"/></svg><svg><use href="#i-extrude"/></svg><svg><use href="#i-pattern"/></svg><svg><use href="#t-mir"/></svg><svg><use href="#t-sk"/></svg><svg><use href="#i-extrude"/></svg><svg><use href="#t-sk"/></svg><svg><use href="#t-sk"/></svg><svg><use href="#t-sk"/></svg><svg><use href="#t-sk"/></svg><svg><use href="#t-sk"/></svg>
      </div>
      <div class="ruler"></div>
      <div class="scrub"></div>
    </div>
    <svg class="tl-gear"><use href="#gear"/></svg>
  </footer>
</div>
</body>
</html>
```
FILE: styles.css
```css
* { box-sizing: border-box; }
html, body { margin: 0; height: 100%; overflow: hidden; }
body { font-family: "Liberation Sans", Arial, sans-serif; font-size: 11px; color: #444; background: #f0f0f0; }
.sprites { display: block; position: absolute; }
.app { display: flex; flex-direction: column; height: 1040px; }

.caret { display: inline-block; width: 0; height: 0; border-left: 3px solid transparent; border-right: 3px solid transparent; border-top: 4px solid #444; margin-left: 4px; vertical-align: 2px; }

/* title bar */
.titlebar { height: 23px; background: #fff; display: flex; align-items: center; padding-left: 8px; position: relative; flex: none; }
.f-logo { width: 11px; height: 15px; margin-right: 4px; }
.app-title { font-family: "Noto Sans", sans-serif; font-size: 12px; color: #222; white-space: nowrap; letter-spacing: -.33px; }
.progress { position: absolute; left: 840px; top: 0; width: 241px; height: 1px; background: #e2e2e2; }
.progress-on { display: block; width: 48px; height: 1px; background: #1a6eb5; }
.winctl { margin-left: auto; display: flex; align-items: center; gap: 34px; padding-right: 19px; }
.winctl svg { width: 12px; height: 12px; }

/* doc tabs */
.tabstrip { height: 32px; background: #cbcbcb; display: flex; padding-top: 4px; flex: none; font-family: Roboto, sans-serif; }
.quick { width: 193px; display: flex; align-items: center; padding-left: 9px; flex: none; }
.quick .caret { margin-left: 0; }
.q-grid { width: 14px; height: 14px; margin-right: 19px; }
.q-doc { width: 13px; height: 20px; margin-right: 6px; }
.q-c1 { margin-right: 20px; }
.q-save { width: 14px; height: 16px; margin-right: 18px; }
.q-undo { width: 14px; height: 14px; margin-right: 6px; }
.q-c2 { margin-right: 15px; }
.q-redo { width: 14px; height: 14px; margin-right: 6px; }
.q-c3 { border-top-color: #999; }
.doc-tab { width: 755px; height: 28px; display: flex; align-items: center; justify-content: center; padding-right: 12px; position: relative; font-size: 12px; color: #555; flex: none; }
.doc-tab-off { background: #b8b8b8; border-radius: 5px 0 0 0; color: #666; }
.doc-tab-on { background: #f0f0f0; margin-left: 4px; border-radius: 5px 0 0 0; color: #444; }
.doc-name { display: flex; align-items: center; }
.doc-cube { width: 16px; height: 16px; margin-right: 3px; }
.doc-x { position: absolute; right: 6px; top: 4px; font-size: 18px; line-height: 20px; color: #777; }
.newtab { width: 28px; height: 28px; margin-left: 4px; background: #b8b8b8; border-radius: 3px 3px 0 0; font-size: 24px; line-height: 27px; text-align: center; color: #777; flex: none; font-weight: 700; }
.account { display: flex; align-items: center; flex: 1; padding-left: 11px; gap: 15px; height: 26px; }
.account svg { width: 18px; height: 18px; }
.avatar { width: 25px; height: 28px; border-radius: 50%; background: #ececec; margin-left: 8px; font-size: 11px; line-height: 28px; text-align: center; color: #555; }

/* ribbon */
.ribbon { height: 82px; background: #f0f0f0; border-bottom: 1px solid #dcdcdc; display: flex; flex: none; padding-left: 11px; font-family: Roboto, sans-serif; color: #555; }
.design { width: 111px; height: 62px; margin-top: 10px; background: #f0f0f0; border: 2px solid #e2e2e2; border-radius: 5px; font-family: Roboto, sans-serif; font-size: 11px; font-weight: 500; color: #444; padding: 0; }
.tools { margin-left: 8px; display: flex; flex-direction: column; }
.rtabs { display: flex; gap: 21px; padding-left: 8px; height: 25px; }
.rtab { height: 25px; line-height: 23px; padding: 0 12px; font-size: 10.5px; color: #555; border-bottom: 4px solid transparent; white-space: nowrap; }
.rtab-on { color: #0e8fd0; border-bottom-color: #1b8fc8; margin-right: 4px; }
.rtab-wide { margin-right: 4px; }
.groups { display: flex; height: 56px; }
.grp { display: flex; flex-direction: column; align-items: center; height: 52px; border-right: 2px solid #e2e2e2; flex: none; }
.g-create { width: 264px; } .g-modify { width: 269px; } .g-assemble { width: 97px; } .g-construct { width: 99px; } .g-inspect { width: 79px; } .g-insert { width: 69px; } .g-select { width: 73px; border-right: 0; }
.tbtns { display: flex; height: 36px; align-items: center; }
.tb { width: 36px; height: 36px; margin: 0 4px; display: block; }
.tb-s2 { margin: 0 6px 0 2px; }
.tb-s5 { margin: 0 9px 0 -1px; }
.tb-sel { width: 38px; height: 38px; margin: -1px 0 -1px 3px; }
.glabel { font-size: 10.8px; line-height: 20px; padding-top: 2px; white-space: nowrap; color: #555; }
.glabel .caret { vertical-align: 2px; margin-left: 3px; }
.g-create .glabel { margin-right: 4px; }
.g-insert .glabel { margin-left: 4px; }
.g-select .glabel { margin-left: 2px; }

/* viewport */
.viewport { position: relative; flex: 1; background: #fff; overflow: hidden; }
.scene { display: block; position: absolute; left: 0; top: 0; width: 100%; height: 100%; }
.ground { fill: #a8d6f4; fill-opacity: .17; }
.shadow { stroke: #8c8c8c; stroke-opacity: .55; stroke-width: 11; filter: url(#blur3); }
.back-tint { fill: #a0c8e6; fill-opacity: .2; }
.plane { fill: #ffb84d; fill-opacity: .45; }
.over-light { fill: #ff9c3c; fill-opacity: .13; }
.over-deep { fill: #ffa028; fill-opacity: .28; }
.cube-shadow { fill: #999; fill-opacity: .35; filter: url(#blur6); }
.navcube polygon { stroke: #888; stroke-width: .8; }
.cube-t { font-family: "Liberation Sans", sans-serif; font-size: 10px; fill: #9a9a9a; }
.axis-z { font-family: "Liberation Sans", sans-serif; font-size: 13px; fill: #8888ee; }
.axis-x { font-family: "Liberation Sans", sans-serif; font-size: 13px; fill: #f08a8a; }

.browser { position: absolute; left: 4px; top: 5px; width: 299px; }
.panelbar { height: 24px; background: #f0f0f0; border: 1px solid #bdbdbd; display: flex; align-items: center; position: relative; padding: 0 0 2px 6px; }
.rew { width: 11px; height: 7px; margin: 2px 7px 0 0; flex: none; }
.panel-t { font-family: Roboto, sans-serif; font-size: 10px; color: #666; letter-spacing: .2px; }
.minus, .plus { width: 11px; height: 11px; border-radius: 50%; background: #222; position: absolute; left: 277px; top: 6px; }
.minus::after { content: ""; position: absolute; left: 2px; top: 4.500px; width: 7px; height: 2px; background: #eee; }
.plus::after { content: "+"; position: absolute; left: 0; top: 0; width: 11px; text-align: center; line-height: 11px; font-size: 11px; font-weight: 700; color: #eee; }
.pipe { position: absolute; left: 295px; top: 6px; width: 2px; height: 11px; border-left: 1px solid #777; }
.tree { position: relative; left: -4px; margin-top: 3px; }
.row { display: flex; align-items: center; height: 24px; }
.tw { display: flex; align-items: center; justify-content: flex-end; height: 20px; flex: none; }
.l0 .tw { width: 45px; border-right: 3px solid #f7b0b0; padding-right: 10px; height: 16px; }
.l1 .tw { width: 58px; padding-right: 7px; }
.l2 { padding-left: 76px; }
.ar { width: 12px; height: 12px; flex: none; }
.pill { display: flex; align-items: center; height: 20px; background: rgba(241,241,241,.95); padding-right: 9px; white-space: nowrap; }
.eye { width: 17px; height: 12px; margin: 0 1px 0 3px; flex: none; }
.ic { width: 16px; height: 16px; margin: 0 13px 0 8px; flex: none; }
.ic-first { margin: 0 13px 0 4px; }
.lbl { font-size: 11px; color: #444; letter-spacing: -.08px; }
.root { padding-right: 0; width: 168px; }
.rootlabel { display: flex; align-items: center; width: 117px; height: 16px; background: #999; margin-left: 5px; position: relative; }
.rootlabel span { position: absolute; left: 33px; font-weight: 700; color: #fff; font-size: 11px; }
.rootic { width: 17px; height: 18px; margin-left: 2px; position: absolute; top: -1px; }
.radio { width: 12px; height: 12px; border-radius: 50%; border: 1px solid #222; margin-left: 5px; position: relative; background: #fff; }
.radio::after { content: ""; position: absolute; left: 2.500px; top: 2.500px; width: 5px; height: 5px; border-radius: 50%; background: #222; }

.comments { position: absolute; left: 4px; top: 824px; width: 299px; height: 25px; background: #f0f0f0; border: 1px solid #cfcfcf; display: flex; align-items: center; padding: 0 0 2px 24px; }
.navbar { position: absolute; left: 841px; top: 824px; width: 237px; height: 24px; background: rgba(240,240,240,.95); display: flex; align-items: center; padding-left: 3px; }
.navbar .caret { border-top-color: #333; margin: 0 0 0 2px; }
.nb { width: 20px; height: 22px; flex: none; }
.nb2 { margin-left: 4px; }
.nb3 { margin-left: 6px; }
.nb4 { margin-left: 6px; }
.nb5 { margin-left: 6px; }
.nb6 { margin-left: 5px; }
.nb7 { margin-left: 5px; }
.nb8 { margin-left: 2px; }

/* timeline */
.timeline { height: 50px; background: #f0f0f0; border-top: 2px solid #cdcdcd; display: flex; flex: none; position: relative; }
.playback { width: 142px; display: flex; align-items: center; padding: 0 0 2px 10px; gap: 11px; }
.playback svg { width: 14px; height: 18px; flex: none; }
.track { position: relative; width: 744px; }
.track-bar { height: 6px; margin: 7px 0 0 2px; width: 740px; background: #ffb0b0; }
.track-items { display: flex; height: 20px; }
.track-items svg { width: 19px; height: 19px; margin: 0 2.500px; flex: none; display: block; position: relative; left: -1px; }
.ruler { position: absolute; left: 12px; top: 34px; width: 721px; height: 6px; border-bottom: 2px solid #cfcfcf; background: repeating-linear-gradient(90deg, #cfcfcf 0 1px, transparent 1px 24px); }
.scrub { position: absolute; left: 743px; top: 9px; width: 2px; height: 32px; background: #555; }
.scrub::before { content: ""; position: absolute; left: -5px; top: 0; width: 12px; height: 9px; background: #555; clip-path: polygon(0 0, 100% 0, 100% 40%, 50% 100%, 0 40%); }
.tl-gear { position: absolute; right: 13px; top: 13px; width: 18px; height: 18px; }
```
